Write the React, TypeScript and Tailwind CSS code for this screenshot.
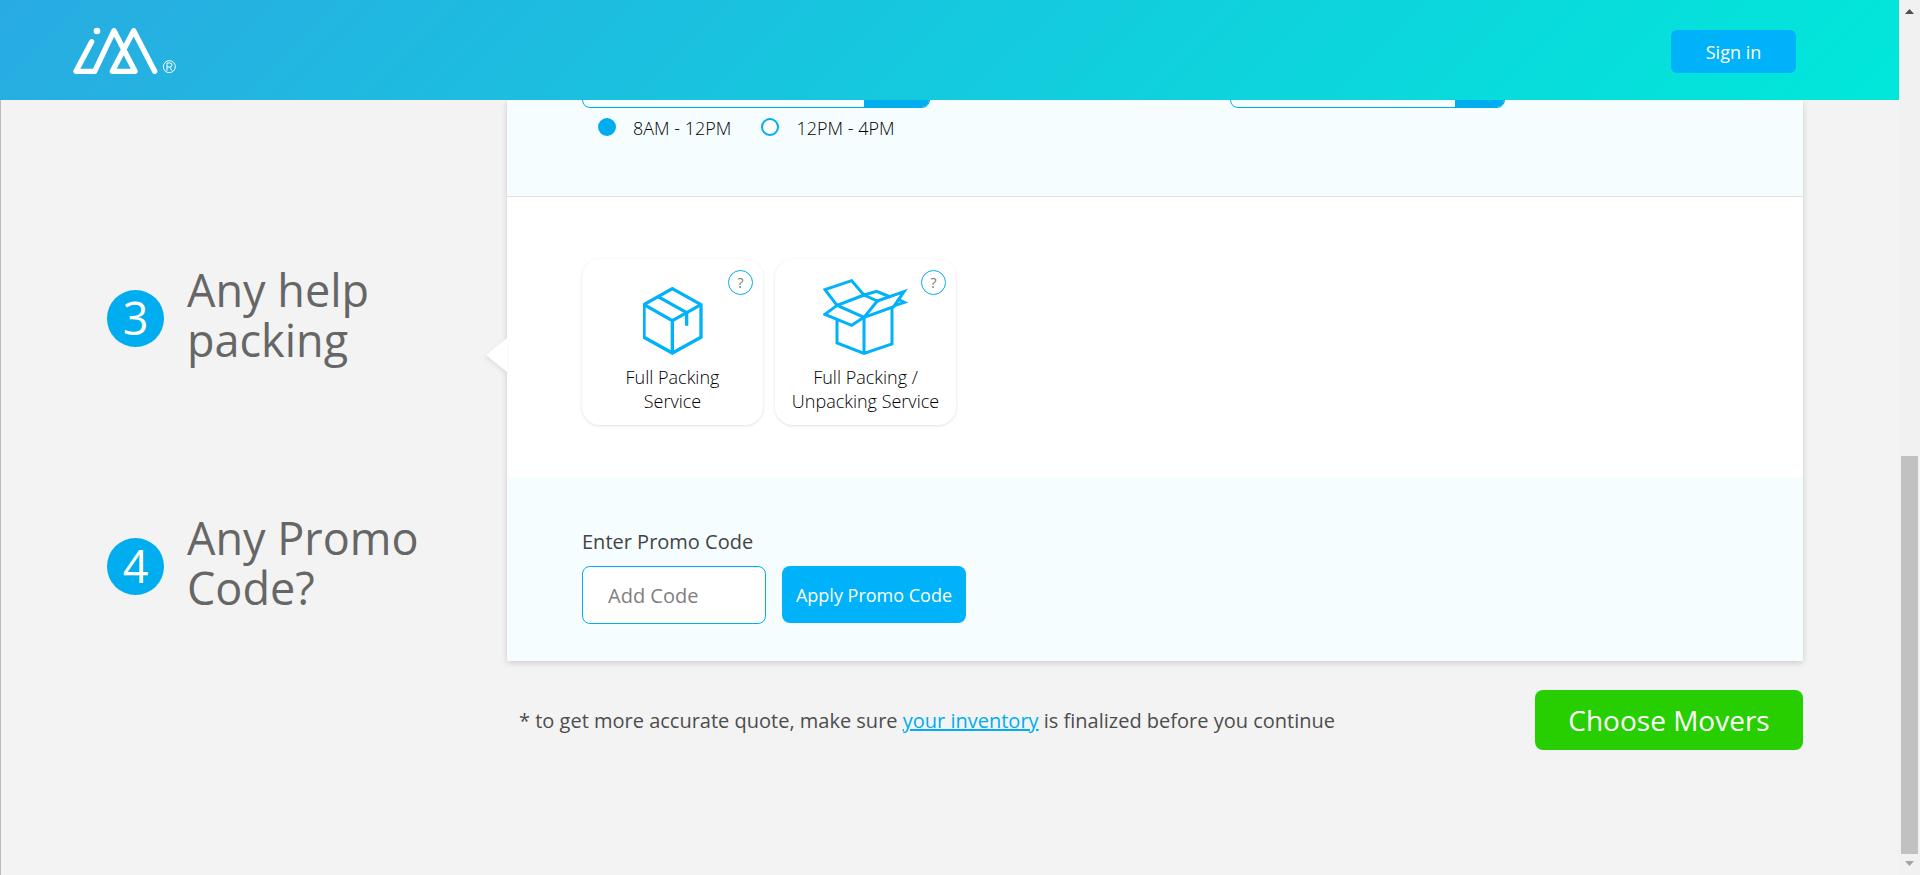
import type { ReactNode } from "react";

function Logo() {
  return (
    <svg viewBox="0 0 312 144" className="mb-0.5 h-12 w-[104px]" role="img" aria-label="iMoving">
      <g fill="none" stroke="#fff" strokeWidth="16" strokeLinecap="round" strokeLinejoin="round">
        <path d="M56 44 L9 133 H65 L123 11 L186 133 H118 L182 11 L245 133" />
      </g>
      <circle cx="72" cy="12" r="10" fill="#fff" />
      <circle cx="289" cy="119" r="18" fill="none" stroke="#fff" strokeWidth="3" />
      <path d="M282 131 V108 H290 Q297 108 297 114 Q297 120 290 120 H282 M290 120 L297 131" fill="none" stroke="#fff" strokeWidth="3" />
    </svg>
  );
}

function ClosedBox() {
  return (
    <svg viewBox="0 0 180 204" className="h-[68px] w-[60px]" aria-hidden="true">
      <g fill="none" stroke="#00b2fa" strokeWidth="10">
        <path d="M88 5 L174 53 V151 L88 198 L3 151 V53 Z" />
        <path d="M3 53 L88 101 L174 53 M88 101 V198" />
        <path d="M45 29 L131 77 V116" />
      </g>
    </svg>
  );
}

function OpenBox() {
  return (
    <svg viewBox="0 0 255 228" className="h-[76px] w-[85px]" aria-hidden="true">
      <g fill="none" stroke="#00b2fa" strokeWidth="9">
        <path d="M42 79 L6 32 L86 5 L123 48 Z" />
        <path d="M42 79 L6 106 L86 139 L123 115 Z" />
        <path d="M123 48 L163 66 L123 115" />
        <path d="M163 66 L243 38 L212 83 L123 115" />
        <path d="M123 48 L161 37 L202 54 M224 60 L244 70 L214 80" />
        <path d="M42 122 V192 L123 223 L207 195 V84 M123 115 V223" />
      </g>
    </svg>
  );
}

function Step({ number, title, className }: { number: number; title: string; className: string }) {
  return (
    <div className={`flex items-center gap-[23px] pl-[106px] ${className}`}>
      <span className="flex size-[57px] shrink-0 items-center justify-center rounded-full bg-[#00adef] text-[45px] leading-[50px] text-white">
        {number}
      </span>
      <h2 className="w-[260px] pb-[6px] text-[45px] leading-[50px] text-[#666]">{title}</h2>
    </div>
  );
}

function ServiceCard({ icon, lines }: { icon: ReactNode; lines: string[] }) {
  return (
    <div className="relative flex h-[166px] w-[181px] flex-col items-center justify-end rounded-[18px] bg-white pb-3 shadow-[0_1px_3px_rgba(0,0,0,0.12)]">
      <button
        type="button"
        aria-label={`About ${lines.join(" ")}`}
        className="absolute top-[11px] right-[10px] flex size-[25px] items-center justify-center rounded-full border border-[#00adef] text-sm text-[#777]"
      >
        ?
      </button>
      {icon}
      <p className="mt-[10px] text-center text-lg leading-6 font-light text-black">
        {lines[0]}
        <br />
        {lines[1]}
      </p>
    </div>
  );
}

function DateField({ label, className, buttonClass }: { label: string; className: string; buttonClass: string }) {
  return (
    <div className={`flex h-[58px] overflow-hidden rounded-lg border border-[#00adef] bg-[#f7feff] ${className}`}>
      <input aria-label={label} className="min-w-0 flex-1 px-4 outline-none" />
      <button type="button" aria-label={`Open ${label}`} className={`bg-[#00adef] ${buttonClass}`} />
    </div>
  );
}

function TimeOption({ label, checked }: { label: string; checked?: boolean }) {
  return (
    <label className="flex items-start gap-[17px] text-lg leading-6 font-light text-black">
      <input
        type="radio"
        name="time"
        defaultChecked={checked}
        className="mt-0.5 size-[18px] appearance-none rounded-full border-2 border-[#00adef] bg-white checked:bg-[#00adef]"
      />
      {label}
    </label>
  );
}

export default function App() {
  return (
    <div className="flex min-h-screen bg-[#f3f3f3] font-['Open_Sans','Noto_Sans',sans-serif]">
      <div className="flex min-w-0 flex-1 flex-col">
        <header className="relative z-10 flex h-[100px] items-center justify-between bg-[linear-gradient(135deg,#29abe2,#00e8da)] pt-[3px] pr-[103px] pl-[73px]">
          <a href="#home">
            <Logo />
          </a>
          <button type="button" className="h-[43px] w-[125px] rounded-md bg-[#00b2fa] text-lg text-white">
            Sign in
          </button>
        </header>

        <main className="flex flex-1 flex-col border-l border-[#bbb] pr-24">
          <div className="flex">
            <div className="w-[506px] shrink-0">
              <Step number={3} title="Any help packing" className="mt-[165px]" />
              <Step number={4} title="Any Promo Code?" className="mt-[142px]" />
            </div>

            <div className="min-w-0 flex-1 bg-white shadow-[0_2px_6px_rgba(0,0,0,0.16)]">
              <section className="flow-root h-[97px] border-b border-[#e0e0e0] bg-[#f5fdff] pl-[75px]">
                <div className="-mt-[50px] flex gap-[300px]">
                  <DateField label="Pickup date" className="w-[348px]" buttonClass="w-[65px]" />
                  <DateField label="Delivery date" className="w-[275px]" buttonClass="w-[49px]" />
                </div>
                <div className="mt-2 flex gap-[30px] pl-4">
                  <TimeOption label="8AM - 12PM" checked />
                  <TimeOption label="12PM - 4PM" />
                </div>
              </section>

              <section className="relative flex h-[280px] gap-3 pt-[62px] pl-[75px]">
                <svg viewBox="0 0 21 34" className="absolute top-[141px] -left-[21px] h-[34px] w-[21px] drop-shadow-[-1px_2px_2px_rgba(0,0,0,0.08)]" aria-hidden="true">
                  <path d="M21 0 V34 L0 17 Z" fill="#fff" />
                </svg>
                <ServiceCard icon={<ClosedBox />} lines={["Full Packing", "Service"]} />
                <ServiceCard icon={<OpenBox />} lines={["Full Packing /", "Unpacking Service"]} />
              </section>

              <section className="h-[184px] bg-[#f5fdff] pt-[51px] pl-[75px]">
                <label htmlFor="promo" className="block text-xl leading-7 text-[#444]">
                  Enter Promo Code
                </label>
                <div className="mt-[10px] flex gap-4">
                  <input
                    id="promo"
                    placeholder="Add Code"
                    className="h-[58px] w-[184px] rounded-lg border border-[#00adef] bg-white px-[25px] text-xl placeholder:text-[#808080]"
                  />
                  <button type="button" className="h-[57px] w-[184px] rounded-lg bg-[#00b2fa] text-lg text-white">
                    Apply Promo Code
                  </button>
                </div>
              </section>
            </div>
          </div>

          <div className="mt-[29px] ml-[506px] flex items-center justify-between">
            <p className="pt-0.5 pl-3 text-xl text-[#4d4d4d]">
              * to get more accurate quote, make sure{" "}
              <a href="#inventory" className="text-[#00adef] underline decoration-2">
                your inventory
              </a>{" "}
              is finalized before you continue
            </p>
            <button type="button" className="h-[60px] w-[268px] rounded-lg bg-[#27cf00] text-[28px] text-white">
              Choose Movers
            </button>
          </div>
        </main>
      </div>

      <div className="flex w-[21px] shrink-0 flex-col items-center bg-[#f1f1f1]" aria-hidden="true">
        <svg viewBox="0 0 21 21" className="size-[21px]">
          <path d="M6 14 H15 L10.5 9 Z" fill="#505050" />
        </svg>
        <div className="mt-[435px] w-[17px] flex-1 bg-[#c1c1c1]" />
        <svg viewBox="0 0 21 21" className="size-[21px]">
          <path d="M6 7 H15 L10.5 12 Z" fill="#a3a3a3" />
        </svg>
      </div>
    </div>
  );
}
